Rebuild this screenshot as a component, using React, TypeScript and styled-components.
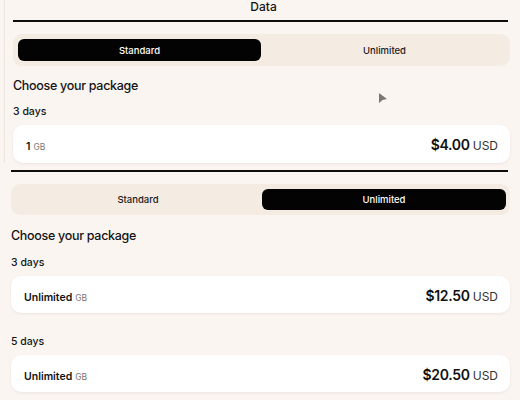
import * as React from 'react';
import styled, { createGlobalStyle } from 'styled-components';

interface Pack {
  days: string;
  amount: string;
  unit: string;
  price: string;
}

const GlobalStyle = createGlobalStyle`
  html, body {
    margin: 0;
    padding: 0;
    background: #fbf5f2;
  }
  body {
    font-family: Inter, "Noto Sans", sans-serif;
    color: #141414;
  }
`;

const Page = styled.div`
  position: relative;
  width: 520px;
  height: 400px;
  overflow: hidden;
  background: #fbf5f2;
`;

const Panel = styled.section<{ $top?: boolean }>`
  display: flex;
  flex-direction: column;
  height: ${p => (p.$top ? '163px' : 'auto')};
  margin-left: ${p => (p.$top ? '4px' : '0')};
  padding: ${p => (p.$top ? '0 10px 0 8px' : '7px 10px 0 11px')};
  border-left: ${p => (p.$top ? '1px solid #ece4df' : 'none')};
  box-sizing: border-box;
`;

const Title = styled.div`
  text-align: center;
  font-size: 12px;
  line-height: 14px;
  font-weight: 500;
  padding-left: 4px;
`;

const TabLine = styled.div<{ $top?: boolean }>`
  height: 2px;
  background: #0d0d0d;
  margin-top: ${p => (p.$top ? '6px' : '0')};
  margin-right: 2px;
`;

const Segmented = styled.div<{ $h: number }>`
  display: grid;
  grid-template-columns: 1fr 1fr;
  gap: 2px;
  height: ${p => p.$h}px;
  margin-top: 12px;
  padding: 5px 4px 5px 5px;
  box-sizing: border-box;
  border-radius: 9px;
  background: #f4ebe3;
`;

const Segment = styled.div<{ $active?: boolean }>`
  display: flex;
  align-items: center;
  justify-content: center;
  border-radius: 6px;
  font-size: 9.5px;
  font-weight: 500;
  color: ${p => (p.$active ? '#ffffff' : '#1a1a1a')};
  background: ${p => (p.$active ? '#030303' : 'transparent')};
`;

const Heading = styled.h2<{ $mt: number }>`
  margin: ${p => p.$mt}px 0 0;
  font-size: 12.5px;
  line-height: 20px;
  font-weight: 500;
  letter-spacing: -0.3px;
`;

const DayLabel = styled.div<{ $mt: number }>`
  margin-top: ${p => p.$mt}px;
  font-size: 10.5px;
  line-height: 16px;
  font-weight: 500;
`;

const Card = styled.div<{ $h: number }>`
  display: flex;
  align-items: center;
  justify-content: space-between;
  height: ${p => p.$h}px;
  margin-top: 5px;
  padding: 0 12px 0 13px;
  box-sizing: border-box;
  border-radius: 10px;
  background: #ffffff;
  box-shadow: 0 1px 3px rgba(90, 60, 40, 0.09);
`;

const Amount = styled.span`
  font-size: 10.5px;
  font-weight: 600;
  color: #111;
`;

const Unit = styled.span`
  margin-left: 3px;
  font-size: 8.5px;
  font-weight: 400;
  color: #777;
`;

const Price = styled.span`
  font-size: 14px;
  font-weight: 600;
  letter-spacing: -0.3px;
  color: #111;
`;

const Currency = styled.span`
  margin-left: 3px;
  font-size: 12px;
  font-weight: 400;
  color: #333;
`;

const Cursor = styled.svg`
  position: absolute;
  left: 378px;
  top: 92px;
`;

const PackCard: React.FC<{ pack: Pack; h: number }> = ({ pack, h }) => (
  <Card $h={h}>
    <span>
      <Amount>{pack.amount}</Amount>
      <Unit>{pack.unit}</Unit>
    </span>
    <span>
      <Price>{pack.price}</Price>
      <Currency>USD</Currency>
    </span>
  </Card>
);

const unlimitedPacks: Pack[] = [
  { days: '3 days', amount: 'Unlimited', unit: 'GB', price: '$12.50' },
  { days: '5 days', amount: 'Unlimited', unit: 'GB', price: '$20.50' },
];

const App: React.FC = () => (
  <Page>
    <GlobalStyle />
    <Panel $top>
      <Title>Data</Title>
      <TabLine $top />
      <Segmented $h={32}>
        <Segment $active>Standard</Segment>
        <Segment>Unlimited</Segment>
      </Segmented>
      <Heading $mt={10}>Choose your package</Heading>
      <DayLabel $mt={8}>3 days</DayLabel>
      <PackCard h={38} pack={{ days: '3 days', amount: '1', unit: 'GB', price: '$4.00' }} />
    </Panel>

    <Panel>
      <TabLine />
      <Segmented $h={31}>
        <Segment>Standard</Segment>
        <Segment $active>Unlimited</Segment>
      </Segmented>
      <Heading $mt={11}>Choose your package</Heading>
      {unlimitedPacks.map((pack, i) => (
        <React.Fragment key={pack.days}>
          <DayLabel $mt={i === 0 ? 9 : 21}>{pack.days}</DayLabel>
          <PackCard h={37} pack={pack} />
        </React.Fragment>
      ))}
    </Panel>

    <Cursor width="10" height="12" viewBox="0 0 10 12">
      <path d="M1 1 L9 7 L4.5 8 L1 11 Z" fill="#7a7674" />
    </Cursor>
  </Page>
);

export default App;
